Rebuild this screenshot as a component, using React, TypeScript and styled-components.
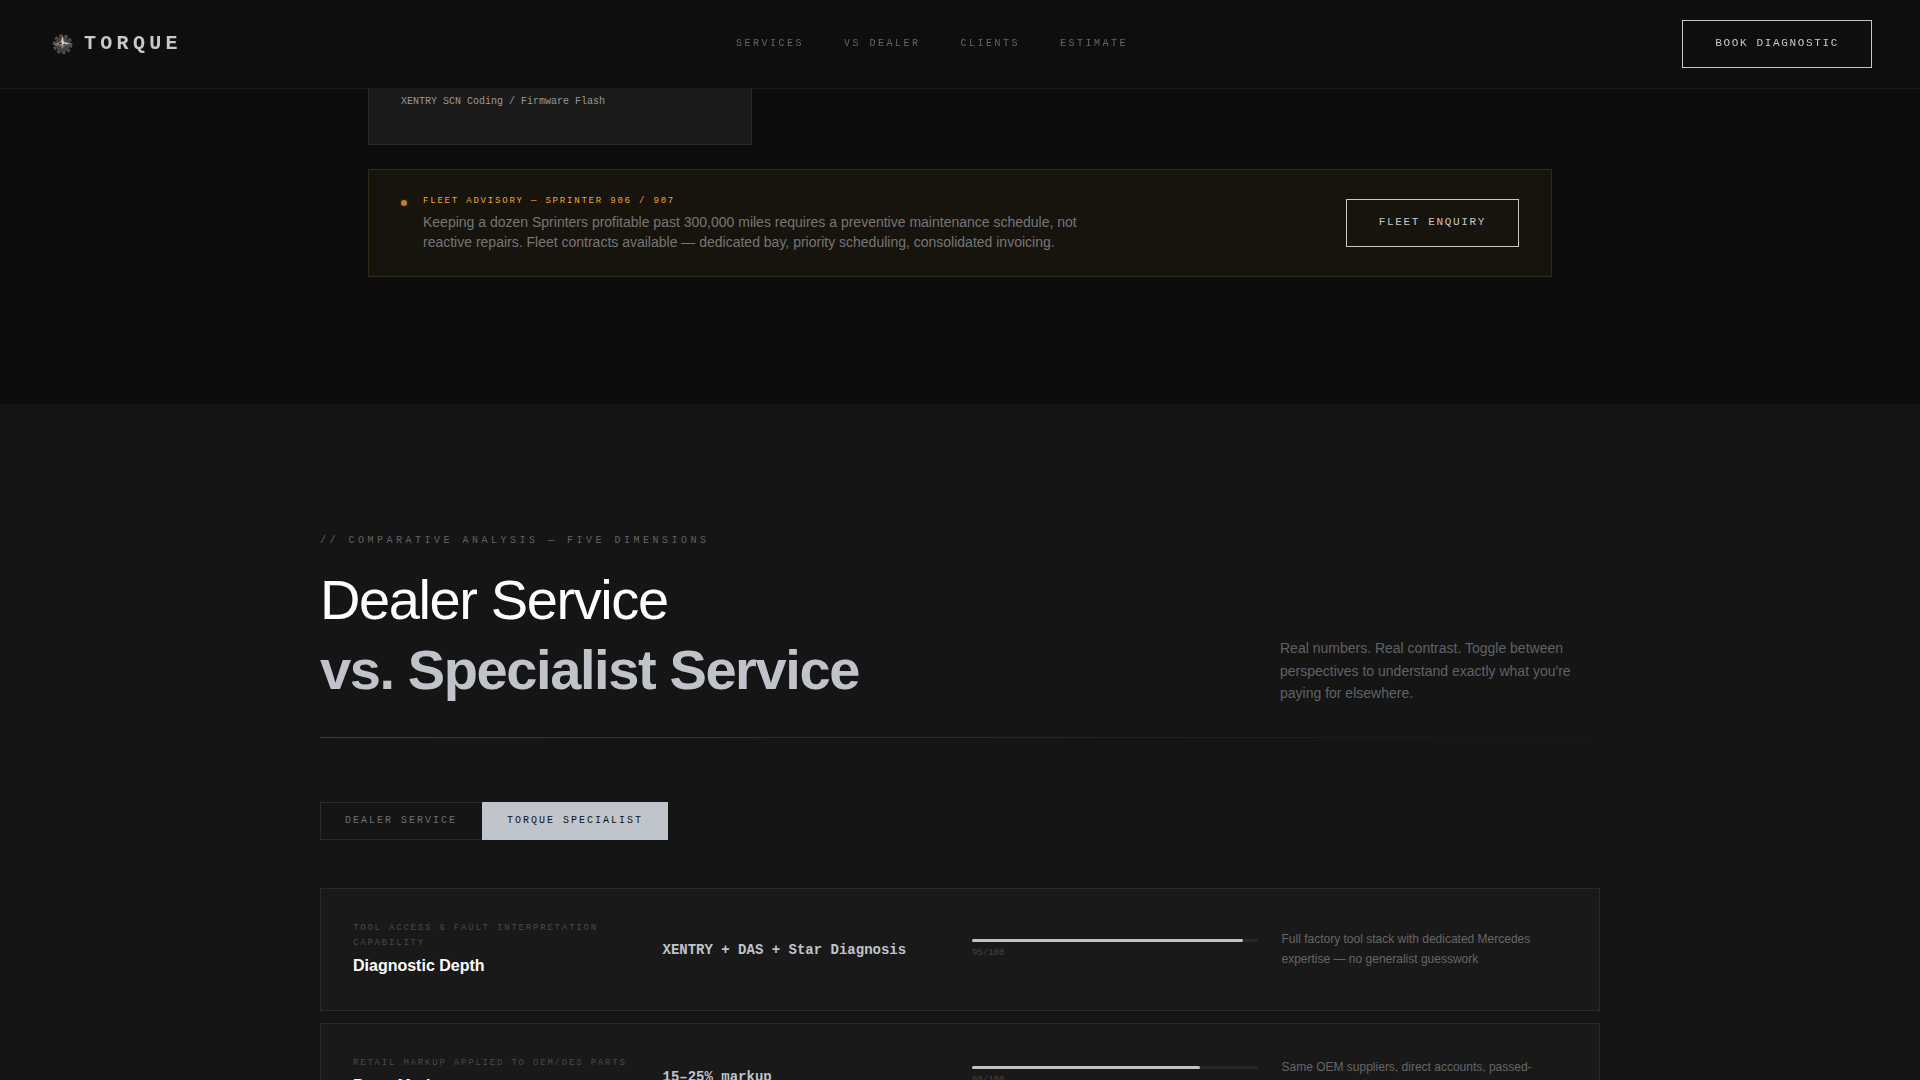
import React, { useState } from 'react';
import styled, { createGlobalStyle } from 'styled-components';

const mono = `'Liberation Mono', 'Courier New', monospace`;
const sans = `'Liberation Sans', Arial, sans-serif`;

const GlobalStyle = createGlobalStyle`
  *, *::before, *::after { box-sizing: border-box; margin: 0; padding: 0; }
  html, body { background: #0d0d0d; }
  body { font-family: ${sans}; line-height: 1.6; color: #fff; overflow: hidden; }
`;

const Page = styled.div`
  height: 1080px;
  overflow: hidden;
`;

const Nav = styled.nav`
  position: fixed;
  top: 0;
  left: 0;
  right: 0;
  z-index: 10;
  display: flex;
  align-items: center;
  justify-content: space-between;
  height: 89px;
  padding: 0 48px;
  background: rgba(14, 14, 14, 0.97);
  border-bottom: 1px solid #1c1c1c;
`;

const Brand = styled.a`
  display: flex;
  align-items: center;
  gap: 8px;
  height: 28px;
  font: 700 20px/28px ${mono};
  letter-spacing: 4.3px;
  color: #c8c8c8;
`;

const NavLinks = styled.div`
  display: flex;
  gap: 40px;
`;

const NavLink = styled.a`
  font: 400 10px/16px ${mono};
  letter-spacing: 0.25em;
  color: #666;
`;

const OutlineButton = styled.button`
  flex: none;
  padding: 13px 32px 15px;
  background: transparent;
  border: 1px solid #c8c8c8;
  border-radius: 0;
  font: 400 11px/18px ${mono};
  letter-spacing: 0.15em;
  color: #c8c8c8;
`;

const Services = styled.section`
  width: 1280px;
  margin: 0 auto;
  padding: 0 48px 127px;
`;

const ServiceGrid = styled.div`
  display: grid;
  grid-template-columns: repeat(3, 1fr);
  gap: 16px;
`;

const ServiceCard = styled.article`
  display: flex;
  flex-direction: column;
  justify-content: flex-end;
  height: 144.9px;
  padding: 0 32px 34px;
  background: linear-gradient(180deg, #1e1e1e, #191919);
  border: 1px solid #2a2a2a;
  border-top: 0;
`;

const ToolName = styled.p`
  font: 400 10px/16px ${mono};
  color: #999;
`;

const FleetBanner = styled.aside`
  display: flex;
  align-items: center;
  justify-content: space-between;
  margin-top: 24px;
  padding: 24px 32px;
  background: #17140d;
  border: 1px solid #2f2a12;
`;

const FleetInfo = styled.div`
  display: flex;
  gap: 16px;
`;

const StatusDot = styled.span`
  flex: none;
  width: 6px;
  height: 6px;
  margin-top: 6px;
  border-radius: 50%;
  background: #bb7f28;
  box-shadow: 0 0 3px rgba(184, 124, 38, 0.35);
`;

const FleetLabel = styled.p`
  margin-bottom: 4px;
  font: 400 9px/15.3px ${mono};
  letter-spacing: 0.2em;
  color: #f5a623;
`;

const FleetText = styled.p`
  width: 672px;
  font-size: 14px;
  line-height: 19.6px;
  color: #767676;
`;

const Comparison = styled.section`
  min-height: 700px;
  padding: 128.2px 0;
  background: #151515;
`;

const Container = styled.div`
  width: 1280px;
  margin: 0 auto;
`;

const SectionHeader = styled.header`
  display: flex;
  align-items: flex-end;
  justify-content: space-between;
`;

const Eyebrow = styled.p`
  margin-bottom: 16px;
  font: 400 10px/16px ${mono};
  letter-spacing: 0.35em;
  color: #626262;
`;

const Title = styled.h2`
  font-size: 56px;
  font-weight: 400;
  line-height: 70px;
  letter-spacing: -0.025em;
  color: #fff;

  strong {
    display: block;
    font-weight: 700;
    color: #c0c4ca;
  }
`;

const Intro = styled.p`
  width: 320px;
  font-size: 14px;
  line-height: 22.4px;
  color: #606266;
`;

const Divider = styled.div`
  height: 1px;
  margin: 32px 0 64px;
  background: linear-gradient(90deg, #3c3c3c, transparent);
`;

const Tabs = styled.div`
  display: flex;
  margin-bottom: 48px;
`;

const Tab = styled.button<{ $active: boolean }>`
  padding: 10px 24px;
  border: 1px solid ${(p) => (p.$active ? '#c0c5cb' : '#2a2a2a')};
  border-right-color: ${(p) => (p.$active ? '#c0c5cb' : 'transparent')};
  border-radius: 0;
  background: ${(p) => (p.$active ? '#c0c5cb' : 'transparent')};
  font: 400 10px/16px ${mono};
  letter-spacing: 0.2em;
  color: ${(p) => (p.$active ? '#111' : '#6c6e72')};
`;

const Rows = styled.div`
  display: flex;
  flex-direction: column;
  gap: 12px;
`;

const Row = styled.article`
  display: grid;
  grid-template-columns: repeat(4, 1fr);
  gap: 24px;
  align-items: center;
  padding: 32px;
  background: #191919;
  border: 1px solid #2a2a2a;
`;

const Metric = styled.p`
  margin-bottom: 4px;
  font: 400 9px/15.3px ${mono};
  letter-spacing: 0.2em;
  color: #4a4a4a;
`;

const Dimension = styled.h3`
  font-size: 16px;
  font-weight: 700;
  line-height: 22.4px;
  color: #fff;
`;

const Value = styled.p`
  padding-top: 1.8px;
  font: 700 14px/22.4px ${mono};
  color: #c0c4ca;
`;

const Track = styled.div`
  height: 3px;
  margin-bottom: 4px;
  border-radius: 2px;
  background: #262626;
`;

const Fill = styled.div`
  height: 3px;
  border-radius: 2px;
  background: #c0c4ca;
`;

const Score = styled.p`
  font: 400 9px/14px ${mono};
  color: #444;
`;

const Note = styled.p`
  padding-top: 0.6px;
  font-size: 12px;
  line-height: 20px;
  color: #666;
`;

const GearLogo = () => (
  <svg width="28" height="28" viewBox="0 0.6 28 28" aria-hidden="true">
    <circle cx="14.6" cy="14.8" r="7.8" fill="#45413f" />
    <circle cx="14.6" cy="14.8" r="8.8" fill="none" stroke="#55504d" strokeWidth="2.2" strokeDasharray="3.4 2" />
    <path d="M14.6 5.5 16.2 12 24 14.2 16.6 16.6 14.6 19 12.2 16.4 5 15.4 12.6 12Z" fill="#857a73" />
    <path d="M14.4 7 15.6 12.8 20.4 14.4 14.8 15.4 9.2 14.4 13.4 12.8Z" fill="#e2d6c9" />
    <path d="M10.4 13.6 13.6 13.2 14 14.6 11.4 15ZM16 14.2 19 15.8 15.2 15.6Z" fill="#2a1d18" />
  </svg>
);

const links = ['SERVICES', 'VS DEALER', 'CLIENTS', 'ESTIMATE'];
const tabs = ['DEALER SERVICE', 'TORQUE SPECIALIST'];

const rows = [
  {
    metric: 'TOOL ACCESS & FAULT INTERPRETATION CAPABILITY',
    name: 'Diagnostic Depth',
    value: 'XENTRY + DAS + Star Diagnosis',
    score: 95,
    note: 'Full factory tool stack with dedicated Mercedes expertise — no generalist guesswork',
  },
  {
    metric: 'RETAIL MARKUP APPLIED TO OEM/OES PARTS',
    name: 'Parts Markup',
    value: '15–25% markup',
    score: 80,
    note: 'Same OEM suppliers, direct accounts, passed-through savings',
  },
];

export default function App() {
  const [active, setActive] = useState(1);
  return (
    <Page>
      <GlobalStyle />
      <Nav>
        <Brand>
          <GearLogo />
          TORQUE
        </Brand>
        <NavLinks>
          {links.map((l) => (
            <NavLink key={l}>{l}</NavLink>
          ))}
        </NavLinks>
        <OutlineButton>BOOK DIAGNOSTIC</OutlineButton>
      </Nav>

      <Services>
        <ServiceGrid>
          <ServiceCard>
            <ToolName>XENTRY SCN Coding / Firmware Flash</ToolName>
          </ServiceCard>
        </ServiceGrid>
        <FleetBanner>
          <FleetInfo>
            <StatusDot />
            <div>
              <FleetLabel>FLEET ADVISORY — SPRINTER 906 / 907</FleetLabel>
              <FleetText>
                Keeping a dozen Sprinters profitable past 300,000 miles requires a preventive maintenance
                schedule, not reactive repairs. Fleet contracts available — dedicated bay, priority
                scheduling, consolidated invoicing.
              </FleetText>
            </div>
          </FleetInfo>
          <OutlineButton>FLEET ENQUIRY</OutlineButton>
        </FleetBanner>
      </Services>

      <Comparison>
        <Container>
          <SectionHeader>
            <div>
              <Eyebrow>// COMPARATIVE ANALYSIS — FIVE DIMENSIONS</Eyebrow>
              <Title>
                Dealer Service
                <strong>vs. Specialist Service</strong>
              </Title>
            </div>
            <Intro>
              Real numbers. Real contrast. Toggle between perspectives to understand exactly what you're
              paying for elsewhere.
            </Intro>
          </SectionHeader>
          <Divider />
          <Tabs>
            {tabs.map((t, i) => (
              <Tab key={t} $active={i === active} onClick={() => setActive(i)}>
                {t}
              </Tab>
            ))}
          </Tabs>
          <Rows>
            {rows.map((r) => (
              <Row key={r.name}>
                <div>
                  <Metric>{r.metric}</Metric>
                  <Dimension>{r.name}</Dimension>
                </div>
                <Value>{r.value}</Value>
                <div>
                  <Track>
                    <Fill style={{ width: `${r.score}%` }} />
                  </Track>
                  <Score>{r.score}/100</Score>
                </div>
                <Note>{r.note}</Note>
              </Row>
            ))}
          </Rows>
        </Container>
      </Comparison>
    </Page>
  );
}
